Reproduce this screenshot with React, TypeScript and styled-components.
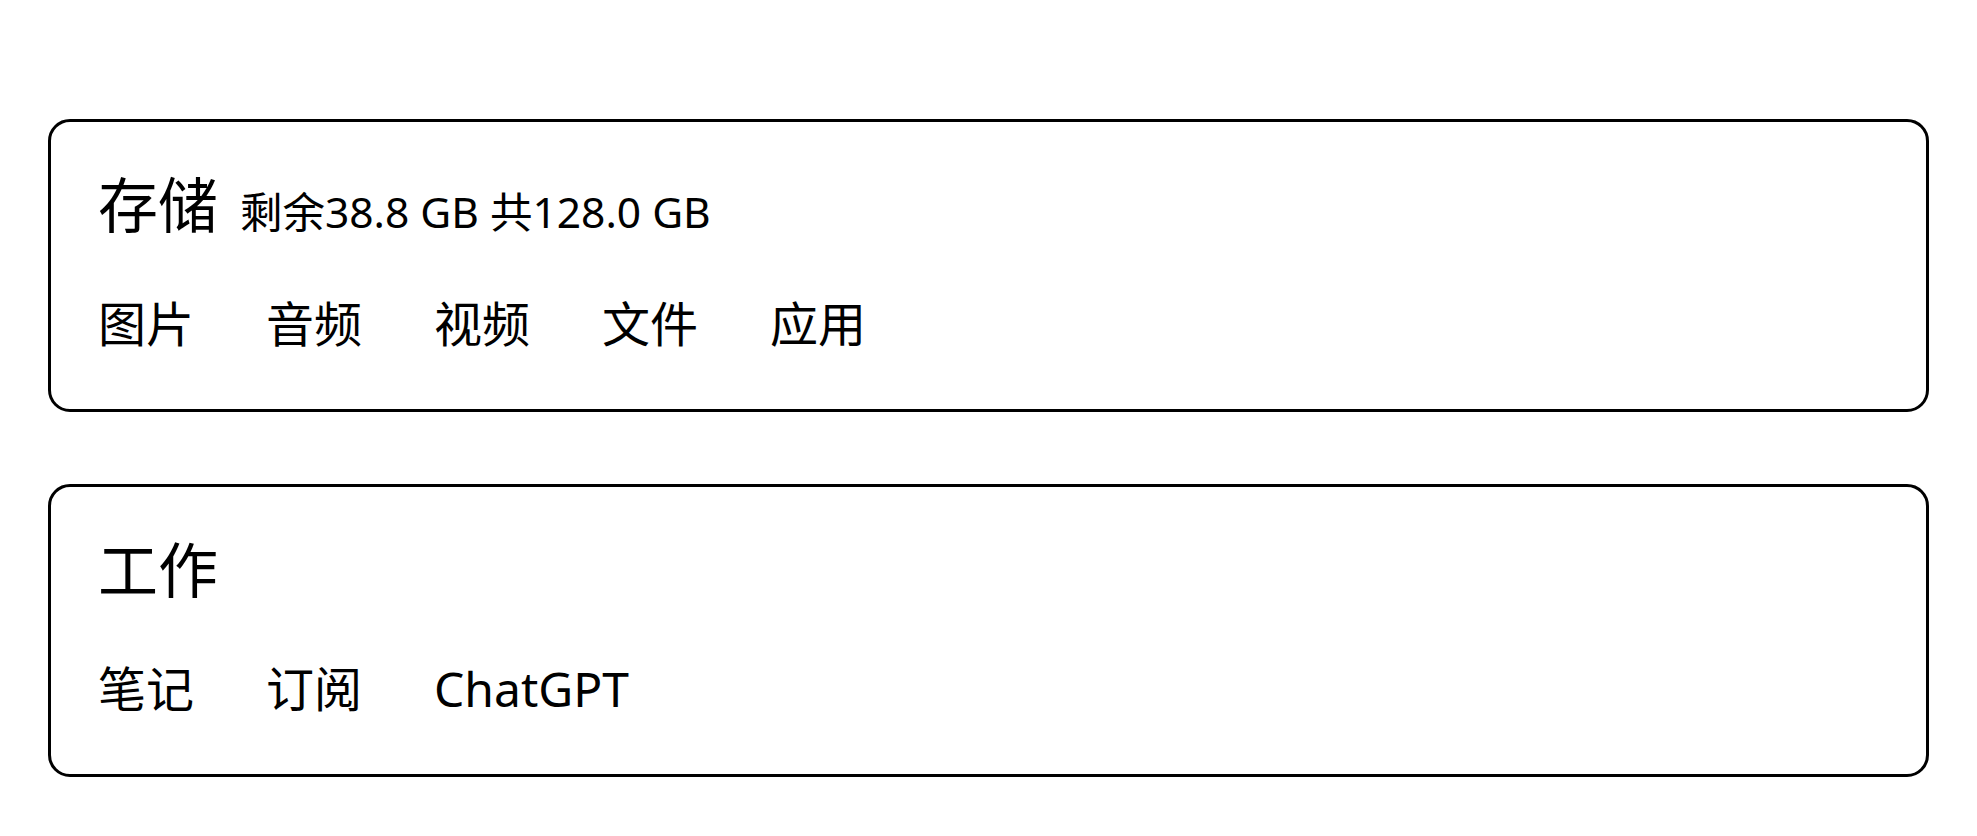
import React from "react";
import styled, { createGlobalStyle } from "styled-components";

const GlobalStyle = createGlobalStyle`
	html, body {
		margin: 0;
		padding: 0;
		background: #ffffff;
	}
	body {
		font-family: "Noto Sans", "Noto Sans CJK SC", sans-serif;
		color: #000000;
	}
`;

interface Section {
	title: string;
	sub?: string;
	items: string[];
}

const sections: Section[] = [
	{
		title: "存储",
		sub: "剩余38.8 GB 共128.0 GB",
		items: ["图片", "音频", "视频", "文件", "应用"],
	},
	{
		title: "工作",
		items: ["笔记", "订阅", "ChatGPT"],
	},
];

const App: React.FC = () => {
	return (
		<>
			<GlobalStyle />
			<Page>
				{sections.map((s) => (
					<Card key={s.title}>
						<Header>
							<Title>{s.title}</Title>
							{s.sub && <Sub>{s.sub}</Sub>}
						</Header>
						<Items>
							{s.items.map((item) => (
								<Item key={item}>{item}</Item>
							))}
						</Items>
					</Card>
				))}
			</Page>
		</>
	);
};

export default App;

const Page = styled.div`
	display: flex;
	flex-direction: column;
	gap: 72px;
	padding: 119px 48px 40px;
`;
const Card = styled.div`
	border: 3px solid #000;
	border-radius: 22px;
	padding: 53px 47px 61px;
`;
const Header = styled.div`
	display: flex;
	align-items: baseline;
	height: 60px;
`;
const Title = styled.span`
	font-size: 60px;
	line-height: 1;
`;
const Sub = styled.span`
	font-size: 42.5px;
	line-height: 1;
	margin-left: 22px;
`;
const Items = styled.div`
	display: flex;
	gap: 72px;
	margin-top: 65px;
`;
const Item = styled.span`
	font-size: 48px;
	line-height: 1;
`;
